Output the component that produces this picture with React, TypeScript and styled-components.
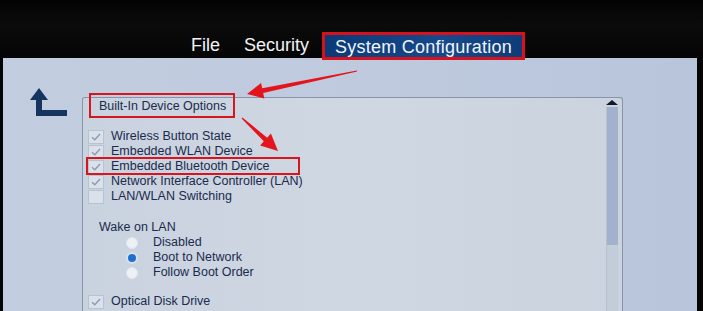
import React from "react";
import styled, { createGlobalStyle } from "styled-components";

const Global = createGlobalStyle`
  html, body { margin: 0; padding: 0; background: #000; }
  body { font-family: "Liberation Sans", Arial, sans-serif; }
`;

const Screen = styled.div`
  position: relative;
  width: 703px;
  height: 311px;
  overflow: hidden;
  background: #050505;
  display: flex;
  flex-direction: column;
`;

const TopBar = styled.div`
  height: 58px;
  flex: none;
  display: flex;
  align-items: flex-end;
  padding-left: 191px;
  background: linear-gradient(#030303 0%, #0b0b0b 40%, #050505 100%);
  position: relative;
  z-index: 2;
`;

const MenuItem = styled.div<{ $active?: boolean }>`
  font-size: 18px;
  line-height: 24px;
  color: #f2f4f7;
  height: 28px;
  display: flex;
  align-items: center;
  box-sizing: border-box;
  margin-right: ${(p) => (p.$active ? "0" : "24px")};
  padding: ${(p) => (p.$active ? "0 10px 0 10px" : "0")};
  margin-bottom: ${(p) => (p.$active ? "-2px" : "0")};
  padding-top: 2px;
  ${(p) =>
    p.$active &&
    `
    border: 3px solid #d8121c;
    background: linear-gradient(90deg, #0b3a78 0%, #164a8c 60%, #0e3c7a 100%);
    margin-left: -11px;
    letter-spacing: 0.25px;
  `}
`;

const Panel = styled.div`
  flex: 1;
  margin: 0 6px 0 3px;
  background: linear-gradient(90deg, #c2cde0 0%, #bfcade 50%, #b8c5db 100%);
  display: flex;
  align-items: flex-start;
  padding: 30px 0 0 27px;
  box-sizing: border-box;
`;

const BackIcon = styled.svg`
  flex: none;
  width: 38px;
  height: 29px;
  margin-right: 14px;
`;

const GroupBox = styled.div`
  margin-top: 9px;
  width: 541px;
  height: 260px;
  box-sizing: border-box;
  border: 1px solid #8894a8;
  border-bottom: none;
  border-radius: 3px 3px 0 0;
  background: linear-gradient(90deg, #c9d2df 0%, #cfd7e2 50%, #cbd3df 100%);
  display: flex;
  color: #1a2b4d;
`;

const GroupContent = styled.div`
  flex: 1;
  padding-left: 5px;
  display: flex;
  flex-direction: column;
  align-items: flex-start;
`;

const Legend = styled.div`
  margin: -5px 0 0 1px;
  width: 146px;
  height: 25px;
  box-sizing: border-box;
  border: 2px solid #d8141c;
  padding: 0 0 0 8px;
  font-size: 12.5px;
  line-height: 20px;
  display: flex;
  align-items: center;
  color: #1a2b4d;
`;

const List = styled.div<{ $top: number }>`
  margin-top: ${(p) => p.$top}px;
  display: flex;
  flex-direction: column;
`;

const CheckRow = styled.div<{ $marked?: boolean }>`
  position: relative;
  height: 15px;
  display: flex;
  align-items: center;
  gap: 7px;
  font-size: 12.5px;
  line-height: 15px;
  ${(p) =>
    p.$marked &&
    `
    &::after {
      content: "";
      position: absolute;
      left: -2px;
      top: -2px;
      width: 214px;
      height: 18px;
      box-sizing: border-box;
      border: 2px solid #d8141c;
    }
  `}
`;

const Box = styled.div`
  width: 16px;
  height: 14px;
  box-sizing: border-box;
  border: 1px solid #b8c2d0;
  background: #dbe1ea;
  display: flex;
  align-items: center;
  justify-content: center;
`;

const SectionTitle = styled.div`
  margin: 16px 0 0 11px;
  height: 15px;
  font-size: 12.5px;
  line-height: 15px;
`;

const RadioRow = styled.div`
  height: 15px;
  display: flex;
  align-items: center;
  margin-left: 38px;
  gap: 15px;
  font-size: 12.5px;
  line-height: 15px;
`;

const Radio = styled.div<{ $on?: boolean }>`
  width: 12px;
  height: 12px;
  border-radius: 50%;
  box-sizing: border-box;
  background: ${(p) => (p.$on ? "#1f6fd1" : "#edf1f6")};
  border: ${(p) => (p.$on ? "2px solid #d8e2ee" : "1px solid #dfe6ef")};
`;

const ScrollBar = styled.div`
  flex: none;
  width: 16px;
  margin: 2px 2px 0 0;
  display: flex;
  flex-direction: column;
  align-items: center;
`;

const ScrollArrow = styled.div`
  width: 0;
  height: 0;
  border-left: 6px solid transparent;
  border-right: 6px solid transparent;
  border-bottom: 5px solid #111a2a;
`;

const Track = styled.div`
  margin-top: 2px;
  width: 11px;
  flex: 1;
  background: #c3ccd9;
  border-left: 1px solid #b6c0cf;
  display: flex;
  flex-direction: column;
`;

const Thumb = styled.div`
  height: 138px;
  background: #a2b2cd;
`;

const Annotations = styled.svg`
  position: absolute;
  left: 0;
  top: 0;
  width: 703px;
  height: 311px;
  pointer-events: none;
  z-index: 3;
`;

const Check = () => (
  <svg width="10" height="8" viewBox="0 0 10 8">
    <path d="M1 4.2 L3.8 6.8 L9 1" fill="none" stroke="#8c9bb3" strokeWidth="1.4" />
  </svg>
);

const checks = [
  { label: "Wireless Button State", on: true },
  { label: "Embedded WLAN Device", on: true },
  { label: "Embedded Bluetooth Device", on: true, marked: true },
  { label: "Network Interface Controller (LAN)", on: true },
  { label: "LAN/WLAN Switching", on: false },
];

const radios = [
  { label: "Disabled", on: false },
  { label: "Boot to Network", on: true },
  { label: "Follow Boot Order", on: false },
];

export default function App() {
  return (
    <>
      <Global />
      <Screen>
        <TopBar>
          <MenuItem>File</MenuItem>
          <MenuItem>Security</MenuItem>
          <MenuItem $active>System Configuration</MenuItem>
        </TopBar>
        <Panel>
          <BackIcon viewBox="0 0 38 29">
            <path d="M9 0 L18 12 L12 12 L12 22 L37 22 L37 28 L6 28 L6 12 L0 12 Z" fill="#15345f" />
          </BackIcon>
          <GroupBox>
            <GroupContent>
              <Legend>Built-In Device Options</Legend>
              <List $top={11}>
                {checks.map((c) => (
                  <CheckRow key={c.label} $marked={c.marked}>
                    <Box>{c.on && <Check />}</Box>
                    {c.label}
                  </CheckRow>
                ))}
              </List>
              <SectionTitle>Wake on LAN</SectionTitle>
              <List $top={0}>
                {radios.map((r) => (
                  <RadioRow key={r.label}>
                    <Radio $on={r.on} />
                    {r.label}
                  </RadioRow>
                ))}
              </List>
              <List $top={14}>
                <CheckRow>
                  <Box>
                    <Check />
                  </Box>
                  Optical Disk Drive
                </CheckRow>
              </List>
            </GroupContent>
            <ScrollBar>
              <ScrollArrow />
              <Track>
                <Thumb />
              </Track>
            </ScrollBar>
          </GroupBox>
        </Panel>
        <Annotations viewBox="0 0 703 311">
          <polygon
            points="247,94 264.3,98.5 263.2,93.1 357.1,71.5 356.9,70.5 262.2,88.3 261.1,82.9"
            fill="#e3141b"
          />
          <polygon
            points="278,151 260.1,145.4 263.8,141.3 241.6,118.4 242.4,117.6 267.2,137.7 270.9,133.6"
            fill="#e3141b"
          />
        </Annotations>
      </Screen>
    </>
  );
}
